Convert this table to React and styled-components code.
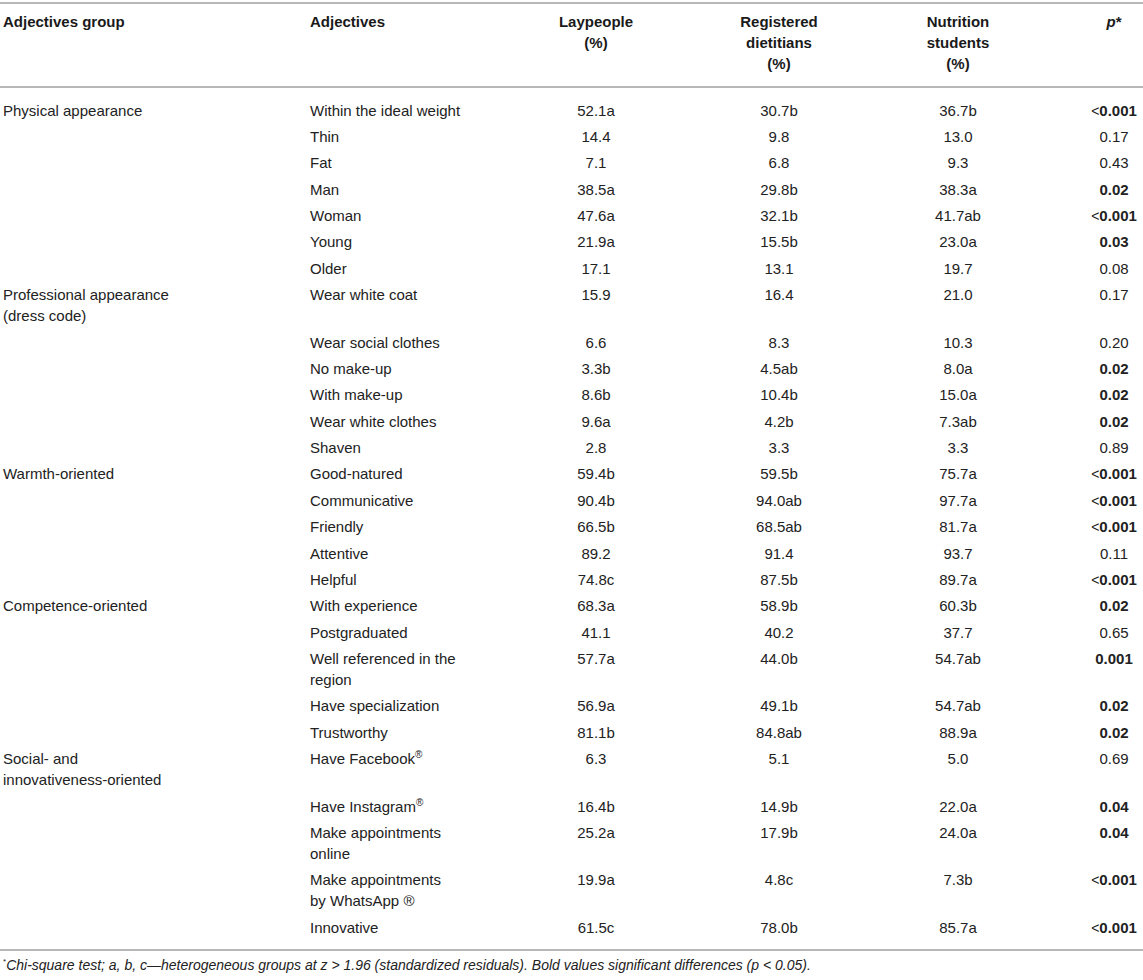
import React from 'react';
import styled, { createGlobalStyle } from 'styled-components';

const GlobalStyle = createGlobalStyle`
  html, body {
    margin: 0;
    padding: 0;
    background: #fff;
  }
  body {
    font-family: "Liberation Sans", Arial, Helvetica, sans-serif;
    color: #222;
  }
`;

const Page = styled.div`
  width: 1143px;
  padding-top: 2px;
`;

const Table = styled.table`
  width: 1143px;
  border-collapse: collapse;
  table-layout: fixed;
  font-size: 15px;
  line-height: 21px;
`;

const Col = styled.col`
  width: ${p => p.$w}px;
`;

const HeadCell = styled.th`
  padding: 7px 3px 12px;
  vertical-align: top;
  text-align: ${p => p.$align || 'left'};
  font-weight: bold;
  color: #1a1a1a;
  border-top: 2px solid #b8b8b8;
  border-bottom: 2px solid #b8b8b8;
`;

const Row = styled.tr`
  &:first-child td {
    padding-top: 11.5px;
  }
  &:last-child td {
    padding-bottom: 11px;
    border-bottom: 2px solid #b8b8b8;
  }
`;

const Cell = styled.td`
  padding: 2.7px 3px;
  vertical-align: top;
  text-align: ${p => p.$align || 'left'};
  font-weight: ${p => (p.$bold ? 'bold' : 'normal')};
`;

const Lt = styled.span`
  font-weight: normal;
  font-size: 14px;
  line-height: 0;
`;

const Mark = styled.sup`
  font-size: 10px;
  line-height: 0;
  vertical-align: 6px;
`;

const Note = styled.p`
  margin: 5px 0 0;
  padding-left: 3px;
  font-size: 14px;
  line-height: 18px;
  font-style: italic;
  color: #222;
`;

const NoteMark = styled.sup`
  font-size: 8px;
  font-style: normal;
  line-height: 0;
  vertical-align: 6px;
`;

const R = <Mark>®</Mark>;

const rows = [
  { g: ['Physical appearance'], a: ['Within the ideal weight'], v: ['52.1a', '30.7b', '36.7b'], p: '<0.001', b: true },
  { a: ['Thin'], v: ['14.4', '9.8', '13.0'], p: '0.17' },
  { a: ['Fat'], v: ['7.1', '6.8', '9.3'], p: '0.43' },
  { a: ['Man'], v: ['38.5a', '29.8b', '38.3a'], p: '0.02', b: true },
  { a: ['Woman'], v: ['47.6a', '32.1b', '41.7ab'], p: '<0.001', b: true },
  { a: ['Young'], v: ['21.9a', '15.5b', '23.0a'], p: '0.03', b: true },
  { a: ['Older'], v: ['17.1', '13.1', '19.7'], p: '0.08' },
  { g: ['Professional appearance', '(dress code)'], a: ['Wear white coat'], v: ['15.9', '16.4', '21.0'], p: '0.17' },
  { a: ['Wear social clothes'], v: ['6.6', '8.3', '10.3'], p: '0.20' },
  { a: ['No make-up'], v: ['3.3b', '4.5ab', '8.0a'], p: '0.02', b: true },
  { a: ['With make-up'], v: ['8.6b', '10.4b', '15.0a'], p: '0.02', b: true },
  { a: ['Wear white clothes'], v: ['9.6a', '4.2b', '7.3ab'], p: '0.02', b: true },
  { a: ['Shaven'], v: ['2.8', '3.3', '3.3'], p: '0.89' },
  { g: ['Warmth-oriented'], a: ['Good-natured'], v: ['59.4b', '59.5b', '75.7a'], p: '<0.001', b: true },
  { a: ['Communicative'], v: ['90.4b', '94.0ab', '97.7a'], p: '<0.001', b: true },
  { a: ['Friendly'], v: ['66.5b', '68.5ab', '81.7a'], p: '<0.001', b: true },
  { a: ['Attentive'], v: ['89.2', '91.4', '93.7'], p: '0.11' },
  { a: ['Helpful'], v: ['74.8c', '87.5b', '89.7a'], p: '<0.001', b: true },
  { g: ['Competence-oriented'], a: ['With experience'], v: ['68.3a', '58.9b', '60.3b'], p: '0.02', b: true },
  { a: ['Postgraduated'], v: ['41.1', '40.2', '37.7'], p: '0.65' },
  { a: ['Well referenced in the', 'region'], v: ['57.7a', '44.0b', '54.7ab'], p: '0.001', b: true },
  { a: ['Have specialization'], v: ['56.9a', '49.1b', '54.7ab'], p: '0.02', b: true },
  { a: ['Trustworthy'], v: ['81.1b', '84.8ab', '88.9a'], p: '0.02', b: true },
  { g: ['Social- and', 'innovativeness-oriented'], a: [<>Have Facebook{R}</>], v: ['6.3', '5.1', '5.0'], p: '0.69' },
  { a: [<>Have Instagram{R}</>], v: ['16.4b', '14.9b', '22.0a'], p: '0.04', b: true },
  { a: ['Make appointments', 'online'], v: ['25.2a', '17.9b', '24.0a'], p: '0.04', b: true },
  { a: ['Make appointments', 'by WhatsApp ®'], v: ['19.9a', '4.8c', '7.3b'], p: '<0.001', b: true },
  { a: ['Innovative'], v: ['61.5c', '78.0b', '85.7a'], p: '<0.001', b: true },
];

const Lines = ({ lines = [] }) =>
  lines.map((line, i) => (
    <React.Fragment key={i}>
      {i > 0 && <br />}
      {line}
    </React.Fragment>
  ));

const PValue = ({ value }) =>
  value.startsWith('<') ? (
    <>
      <Lt>&lt;</Lt>
      {value.slice(1)}
    </>
  ) : (
    value
  );

export default function App() {
  return (
    <Page>
      <GlobalStyle />
      <Table>
        <colgroup>
          <Col $w={307} />
          <Col $w={158} />
          <Col $w={262} />
          <Col $w={104} />
          <Col $w={254} />
          <Col $w={58} />
        </colgroup>
        <thead>
          <tr>
            <HeadCell>Adjectives group</HeadCell>
            <HeadCell>Adjectives</HeadCell>
            <HeadCell $align="center">
              Laypeople
              <br />
              (%)
            </HeadCell>
            <HeadCell $align="center">
              Registered
              <br />
              dietitians
              <br />
              (%)
            </HeadCell>
            <HeadCell $align="center">
              Nutrition
              <br />
              students
              <br />
              (%)
            </HeadCell>
            <HeadCell $align="center">
              <i>p</i>*
            </HeadCell>
          </tr>
        </thead>
        <tbody>
          {rows.map((r, i) => (
            <Row key={i}>
              <Cell>
                <Lines lines={r.g} />
              </Cell>
              <Cell>
                <Lines lines={r.a} />
              </Cell>
              {r.v.map((v, j) => (
                <Cell key={j} $align="center">
                  {v}
                </Cell>
              ))}
              <Cell $align="center" $bold={r.b}>
                <PValue value={r.p} />
              </Cell>
            </Row>
          ))}
        </tbody>
      </Table>
      <Note>
        <NoteMark>*</NoteMark>Chi-square test; a, b, c—heterogeneous groups at z &gt; 1.96 (standardized residuals). Bold
        values significant differences (p &lt; 0.05).
      </Note>
    </Page>
  );
}
